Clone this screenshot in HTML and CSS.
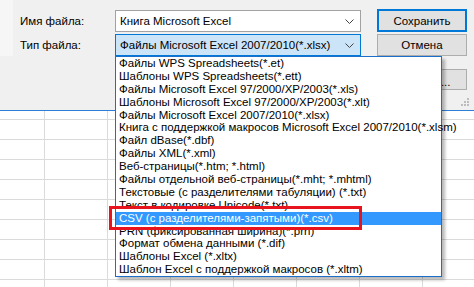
FILE: index.html
```html
<!DOCTYPE html>
<html lang="ru">
<head>
<meta charset="utf-8">
<title>Сохранение документа</title>
<link rel="stylesheet" href="styles.css">
</head>
<body>
<div class="dialog">
  <div class="form">
    <div class="row">
      <span class="label">Имя файла:</span>
      <div class="combo">
        <span class="combo-text">Книга Microsoft Excel</span>
        <svg class="chev" width="9" height="5" viewBox="0 0 9 5"><path d="M0.5 0.5 L4.5 4.5 L8.5 0.5" fill="none" stroke="#444" stroke-width="1"/></svg>
      </div>
    </div>
    <div class="row">
      <span class="label">Тип файла:</span>
      <div class="combo combo-active">
        <span class="combo-text">Файлы Microsoft Excel 2007/2010(*.xlsx)</span>
        <svg class="chev" width="9" height="5" viewBox="0 0 9 5"><path d="M0.5 0.5 L4.5 4.5 L8.5 0.5" fill="none" stroke="#444" stroke-width="1"/></svg>
      </div>
    </div>
  </div>
  <div class="buttons">
    <button class="btn btn-default">Сохранить</button>
    <button class="btn">Отмена</button>
    <button class="btn btn-tools">Сервис...</button>
  </div>
  <svg class="grip" width="9" height="9" viewBox="0 0 9 9">
    <rect x="6" y="0" width="2" height="2" fill="#bcbcbc"/>
    <rect x="3" y="3" width="2" height="2" fill="#bcbcbc"/>
    <rect x="6" y="3" width="2" height="2" fill="#bcbcbc"/>
    <rect x="0" y="6" width="2" height="2" fill="#bcbcbc"/>
    <rect x="3" y="6" width="2" height="2" fill="#bcbcbc"/>
    <rect x="6" y="6" width="2" height="2" fill="#bcbcbc"/>
  </svg>
</div>
<div class="sheet"></div>

<ul class="dropdown">
  <li>Файлы WPS Spreadsheets(*.et)</li>
  <li>Шаблоны WPS Spreadsheets(*.ett)</li>
  <li>Файлы Microsoft Excel 97/2000/XP/2003(*.xls)</li>
  <li>Шаблоны Microsoft Excel 97/2000/XP/2003(*.xlt)</li>
  <li>Файлы Microsoft Excel 2007/2010(*.xlsx)</li>
  <li>Книга с поддержкой макросов Microsoft Excel 2007/2010(*.xlsm)</li>
  <li>Файл dBase(*.dbf)</li>
  <li>Файлы XML(*.xml)</li>
  <li>Веб-страницы(*.htm; *.html)</li>
  <li>Файлы отдельной веб-страницы(*.mht; *.mhtml)</li>
  <li>Текстовые (с разделителями табуляции) (*.txt)</li>
  <li>Текст в кодировке Unicode(*.txt)</li>
  <li class="selected">CSV (с разделителями-запятыми)(*.csv)</li>
  <li>PRN (фиксированная ширина)(*.prn)</li>
  <li>Формат обмена данными (*.dif)</li>
  <li>Шаблоны Excel (*.xltx)</li>
  <li>Шаблон Excel с поддержкой макросов (*.xltm)</li>
</ul>
<div class="highlight-box"></div>
</body>
</html>
```

FILE: styles.css
```css
* { box-sizing: border-box; }

html, body {
  margin: 0;
  padding: 0;
}

body {
  width: 474px;
  height: 287px;
  overflow: hidden;
  position: relative;
  background: #ffffff;
  font-family: "Liberation Sans", Arial, sans-serif;
  font-size: 11.5px;
  color: #000;
}

.dialog {
  position: relative;
  height: 111px;
  display: flex;
  gap: 16px;
  padding: 10px 0 0 20px;
  background: linear-gradient(#f6f6f6, #f6f6f6) no-repeat 0 0 / 13px 56px, #f0f0f0;
  border-bottom: 1px solid #2f7fd6;
}

.form {
  display: flex;
  flex-direction: column;
  gap: 2px;
}

.row {
  display: flex;
  align-items: center;
  height: 22px;
}

.label {
  width: 95px;
}

.combo {
  width: 246px;
  height: 22px;
  display: flex;
  align-items: center;
  justify-content: space-between;
  padding: 0 6px 0 4px;
  background: #fff;
  border: 1px solid #a2a2a2;
}

.combo-active {
  background: #cce4f7;
  border-color: #0078d7;
}

.chev {
  display: block;
}

.buttons {
  display: flex;
  flex-direction: column;
  width: 90px;
  margin-top: -1px;
}

.btn {
  font: inherit;
  color: #000;
  height: 22px;
  padding: 0;
  background: #e1e1e1;
  border: 1px solid #adadad;
  margin: 0;
}

.btn-default {
  height: 23px;
  border: 2px solid #0078d7;
  margin-bottom: 2px;
}

.btn-tools {
  margin-top: 13px;
  height: 21px;
  padding: 4px 0 0 8px;
}

.grip {
  position: absolute;
  right: 4px;
  bottom: 3px;
}

.sheet {
  height: 176px;
  background:
    linear-gradient(to bottom, #dadada 1px, transparent 1px) 0 8px / 100% 20px,
    linear-gradient(to right, #dadada 1px, transparent 1px) 44px 0 / 63px 100%,
    #ffffff;
}

.dropdown {
  position: absolute;
  left: 115px;
  top: 56px;
  width: 327px;
  margin: 0;
  padding: 0;
  list-style: none;
  background: #fff;
  border: 1px solid #1c6fc9;
  box-shadow: 3px 3px 3px rgba(0, 0, 0, 0.28);
}

.dropdown li {
  height: 12.9px;
  line-height: 12.9px;
  padding-left: 3px;
  white-space: nowrap;
}

.dropdown li.selected {
  background: #3399ff;
  color: #fff;
}

.highlight-box {
  position: absolute;
  left: 109px;
  top: 206px;
  width: 253px;
  height: 24px;
  border: 3px solid #e8141d;
}
```
